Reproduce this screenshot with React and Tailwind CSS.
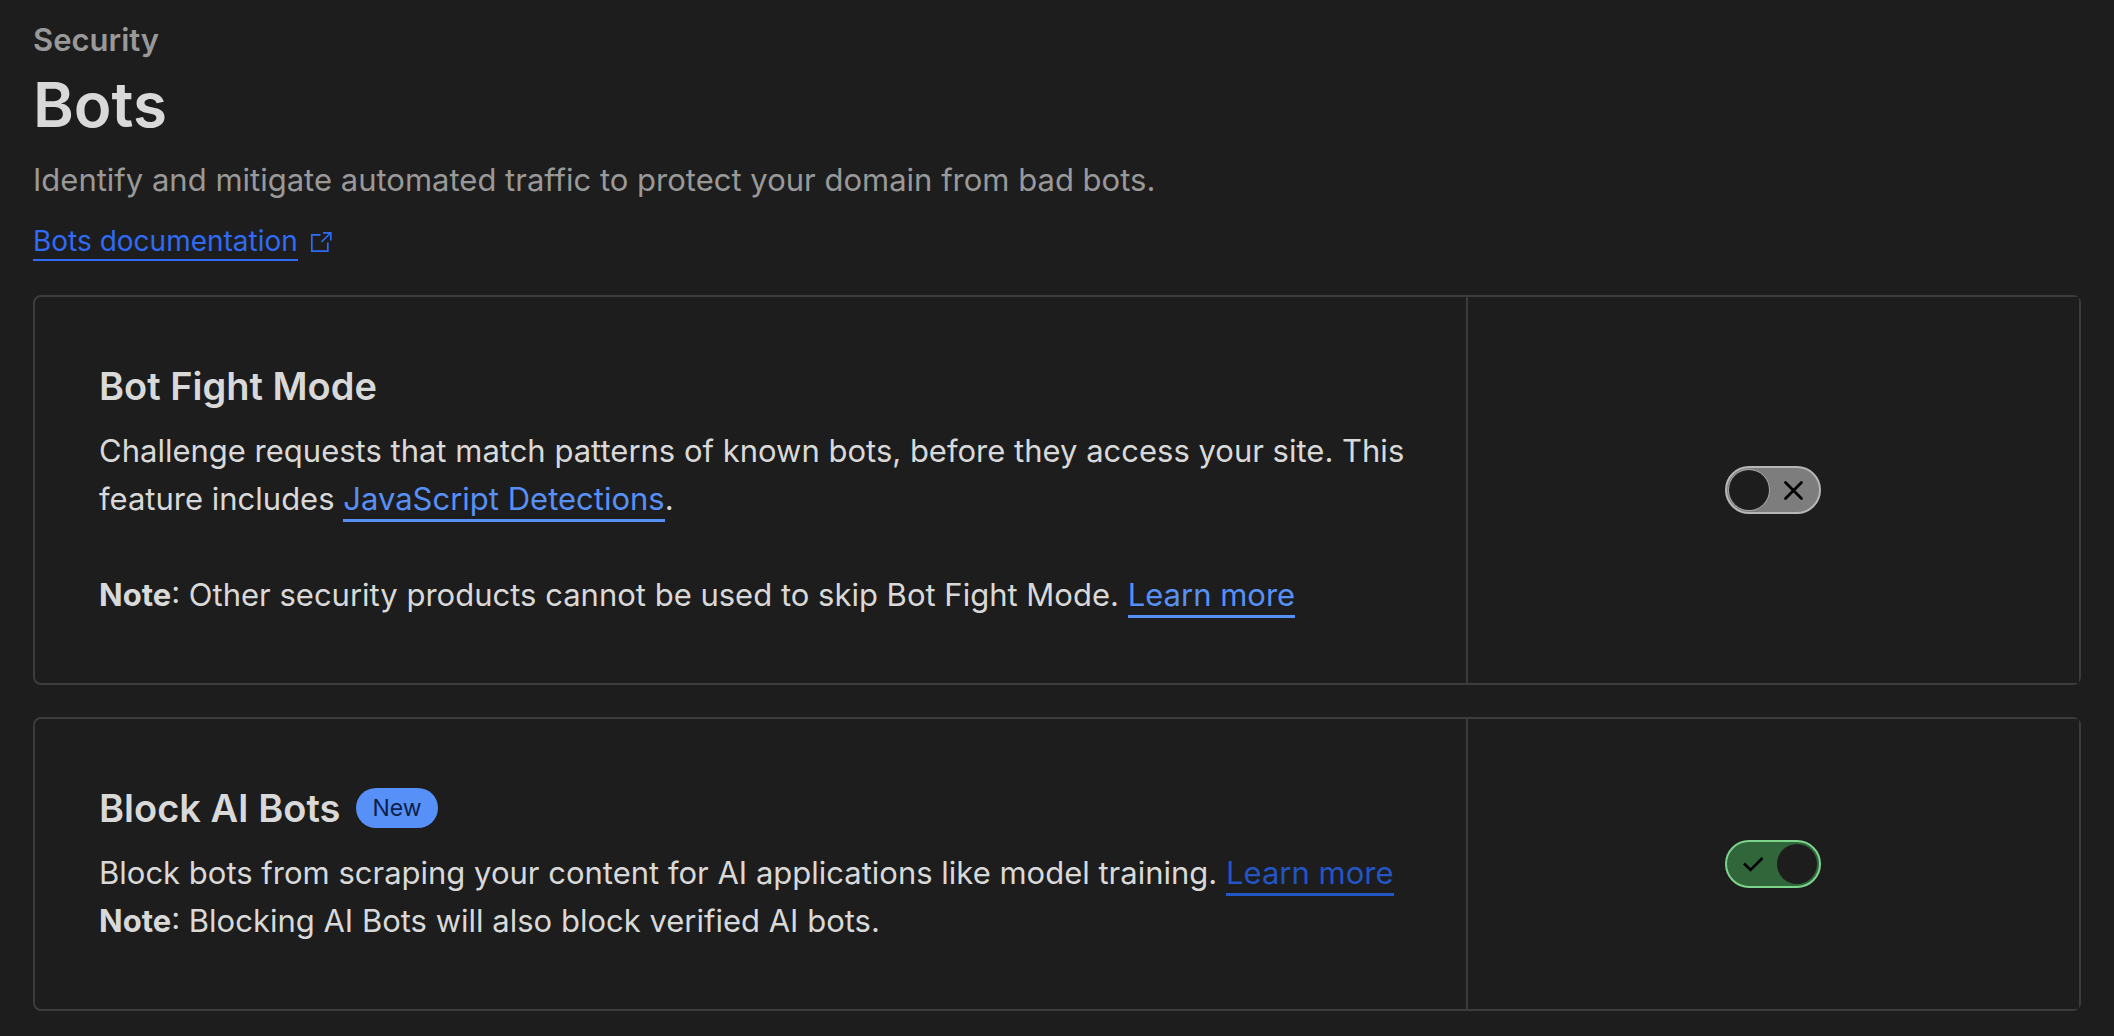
import React, { useState } from 'react';

const ExternalIcon = () => (
  <svg width="22" height="22" viewBox="0 0 22 22" fill="none" stroke="currentColor" strokeWidth="1.7" aria-hidden="true">
    <path d="M10.5 3.8H1.8V20.2H17.8V11.5" />
    <path d="M13 1.8H20.8V9.5M20.5 2L11.5 11" />
  </svg>
);

const Toggle = ({ label, defaultChecked = false }) => {
  const [checked, setChecked] = useState(defaultChecked);
  return (
    <label className="relative block h-12 w-24 cursor-pointer">
      <input
        type="checkbox"
        role="switch"
        aria-label={label}
        checked={checked}
        onChange={e => setChecked(e.target.checked)}
        className="block h-12 w-24 cursor-pointer appearance-none rounded-full border-2 border-[#b6b6b6] bg-[#7d7d7d] checked:border-[#7dd48b] checked:bg-[#31653a]"
      />
      <svg className="pointer-events-none absolute inset-0" width="96" height="48" viewBox="0 0 96 48" fill="none" aria-hidden="true">
        {checked ? (
          <>
            <path d="M19 23.5L25.5 30L37.5 18" stroke="#000" strokeWidth="2.6" />
            <circle cx="72" cy="24" r="20" fill="#1d1d1d" />
          </>
        ) : (
          <>
            <circle cx="24" cy="24" r="21" fill="#a5a5a5" />
            <circle cx="24" cy="24" r="20" fill="#1d1d1d" />
            <path d="M60.5 16.5L76.5 32.5M76.5 16.5L60.5 32.5" stroke="#000" strokeWidth="2.8" strokeLinecap="round" />
          </>
        )}
      </svg>
    </label>
  );
};

const TextLink = ({ children, className }) => (
  <a href="#" className={`border-b-3 pb-0.5 ${className}`}>{children}</a>
);

const SettingCard = ({ title, badge, control, children }) => (
  <section className="flex rounded-lg border-2 border-[#3c3c3c]">
    <div className="w-[70%] py-16 pr-12 pl-16">
      <div className="mb-4 flex h-[50px] items-center gap-4">
        <h2 className="text-[38px] font-semibold">{title}</h2>
        {badge && <span className="rounded-full bg-[#5790f7] px-4 text-[23px] leading-10 text-[#0c1f4d]">{badge}</span>}
      </div>
      <div className="text-[31px] leading-12">{children}</div>
    </div>
    <div className="flex flex-1 items-center justify-center border-l-2 border-[#3c3c3c] bg-[#1d1d1d]">{control}</div>
  </section>
);

export default function App() {
  return (
    <main className="min-h-screen bg-[#1d1d1d] px-[33px] pt-5 font-['Inter',sans-serif] text-[#d9d9d9]">
      <header className="mb-[34px]">
        <p className="text-[31px] leading-10 font-semibold text-[#999999]">Security</p>
        <h1 className="mt-[5px] text-[62px] leading-20 font-semibold">Bots</h1>
        <p className="mt-[11px] text-[31px] leading-12 text-[#999999]">Identify and mitigate automated traffic to protect your domain from bad bots.</p>
        <a href="#" className="mt-[19px] flex w-fit items-center gap-3 text-[#2f6bf6]">
          <span className="border-b-2 text-[28px] leading-9">Bots documentation</span>
          <ExternalIcon />
        </a>
      </header>

      <div className="flex flex-col gap-8">
        <SettingCard title="Bot Fight Mode" control={<Toggle label="Bot Fight Mode" />}>
          <p>
            Challenge requests that match patterns of known bots, before they access your site. This feature includes{' '}
            <TextLink className="text-[#5790f7]">JavaScript Detections</TextLink>.
          </p>
          <p className="mt-12">
            <strong className="font-bold">Note</strong>: Other security products cannot be used to skip Bot Fight Mode.{' '}
            <TextLink className="text-[#5790f7]">Learn more</TextLink>
          </p>
        </SettingCard>

        <SettingCard title="Block AI Bots" badge="New" control={<Toggle label="Block AI Bots" defaultChecked />}>
          <p>
            Block bots from scraping your content for AI applications like model training.{' '}
            <TextLink className="text-[#2355c4]">Learn more</TextLink>
          </p>
          <p>
            <strong className="font-bold">Note</strong>: Blocking AI Bots will also block verified AI bots.
          </p>
        </SettingCard>
      </div>
    </main>
  );
}
